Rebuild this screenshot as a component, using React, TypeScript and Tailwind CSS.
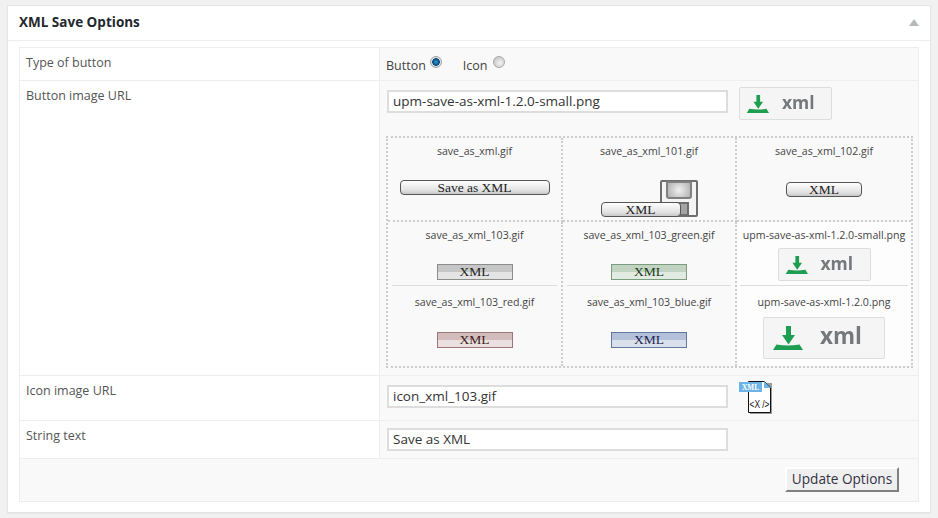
import React from "react";

const serif = "font-['Liberation_Serif',serif]";

function Radio({ on }: { on?: boolean }) {
  return (
    <span
      className={
        on
          ? "w-3 h-3 rounded-full border border-[#a0a0a0] bg-[radial-gradient(circle,#3a9ad6_0%,#0b4f86_45%,#0b4f86_50%,#e6e6e6_58%,#d4d4d4_100%)] mb-[7px] ml-[4px]"
          : "w-3 h-3 rounded-full border border-[#a8a8a8] bg-[radial-gradient(circle_at_60%_60%,#f2f2f2_0%,#d2d2d2_60%,#bcbcbc_100%)] mb-[7px] ml-[5px]"
      }
    />
  );
}

function Arrow({ w, h }: { w: number; h: number }) {
  return (
    <svg width={w} height={h} viewBox="0 0 31 24" className="blur-[0.3px] shrink-0">
      <path d="M14 0h5v9h4l-6.5 9.5L10 9h4z" fill="#1e9e50" />
      <path d="M1 24l3.5-5.5Q16 20.5 27.5 18.5L31 24z" fill="#1e9e50" />
    </svg>
  );
}

function DownloadXml({ big }: { big?: boolean }) {
  if (big) {
    return (
      <div className="w-[122px] h-[42px] bg-[#f5f5f5] border border-[#dddddd] rounded-[2px] flex items-center pl-[8px] gap-[17px]">
        <Arrow w={31} h={24} />
        <span className="text-[22.5px] leading-none font-bold text-[#75787c] font-['Open_Sans',sans-serif] mb-[3px] blur-[0.3px]">xml</span>
      </div>
    );
  }
  return (
    <div className="w-[93px] h-[33px] bg-[#f5f5f5] border border-[#dddddd] rounded-[2px] flex items-center pl-[6px] gap-[13px]">
      <Arrow w={23} h={18} />
      <span className="text-[17.5px] leading-none font-bold text-[#75787c] font-['Open_Sans',sans-serif] mb-[2px] blur-[0.3px]">xml</span>
    </div>
  );
}

function Pill({ text, w }: { text: string; w: string }) {
  return (
    <div
      className={`${w} h-[15px] rounded-[4px] border border-[#555555] bg-[linear-gradient(#ffffff,#e2e2e2_70%,#c9c9c9)] flex items-center justify-center text-[13.5px] leading-none text-[#222222] ${serif}`}
    >
      {text}
    </div>
  );
}

function Flat({ tone }: { tone: "gray" | "green" | "red" | "blue" }) {
  const cls = {
    gray: "border-[#8c8c8c] bg-[linear-gradient(#c6c6c6_50%,#e4e4e4_50%)] text-[#222222]",
    green: "border-[#7d9c7d] bg-[linear-gradient(#c1d3c1_50%,#e2ebe2_50%)] text-[#1c3a1c]",
    red: "border-[#9c7676] bg-[linear-gradient(#d3bcbc_50%,#ebe0e0_50%)] text-[#3a1c1c]",
    blue: "border-[#5f78a2] bg-[linear-gradient(#b4c1d9_50%,#dbe1ec_50%)] text-[#1c2650]",
  }[tone];
  return (
    <div className={`w-[76px] h-4 border flex items-center justify-center text-[13.5px] leading-none ${serif} ${cls}`}>
      XML
    </div>
  );
}

function Floppy() {
  return (
    <div className="relative w-[97px] h-[37px]">
      <div className="absolute right-0 top-0 w-[38px] h-[37px] bg-[#f4f4f4] border-2 border-[#6e6e6e] rounded-[2px]" />
      <div className="absolute right-[6px] top-[1px] w-[26px] h-[18px] border-2 border-[#808080] rounded-b-[3px] bg-[radial-gradient(circle,#f0f0f0,#b0b0b0)]" />
      <div className="absolute right-[9px] bottom-[1px] w-[26px] h-[14px] bg-[#a4a4a4] border-2 border-[#6e6e6e]" />
      <div className="absolute left-0 bottom-0 w-[80px] h-[15px] rounded-[4px] border border-[#555555] bg-[linear-gradient(#ffffff,#e2e2e2_70%,#c9c9c9)] flex items-center justify-center text-[13.5px] leading-none text-[#222222] font-['Liberation_Serif',serif]">
        XML
      </div>
    </div>
  );
}

function Label({ children }: { children: React.ReactNode }) {
  return <div className="text-[10.6px] leading-[15px] text-[#444444] whitespace-nowrap text-center">{children}</div>;
}

function XmlFileIcon() {
  return (
    <svg width="34" height="34" viewBox="0 0 34 34">
      <path d="M11 3h22v31H11z" fill="#9a9a9a" />
      <path d="M9.5 1.5h16l6 6v25h-22z" fill="#ffffff" stroke="#111111" strokeWidth="1" />
      <path d="M25 1l7 7h-7z" fill="#6db3e6" />
      <rect x="0" y="2" width="23" height="10" fill="#6db3e6" />
      <text x="3" y="10" fontSize="8.5" fill="#ffffff" fontFamily="Liberation Serif, serif" fontWeight="700" textLength="17" lengthAdjust="spacingAndGlyphs">XML</text>
      <text x="10.5" y="28" fontSize="10" fill="#111111" fontFamily="Liberation Sans, sans-serif" textLength="20" lengthAdjust="spacingAndGlyphs">{"<X />"}</text>
    </svg>
  );
}

const inputCls =
  "w-[341px] border-2 border-[#dddddd] bg-white px-[4px] pb-[2px] text-[13.5px] text-[#333333] outline-none font-['Open_Sans',sans-serif]";
const leftCls = "bg-white px-[6px] pt-[6px] text-[12.5px] leading-[18px] text-[#555555] border-r border-[#eeeeee]";
const rowCls = "grid grid-cols-[360px_1fr] border-b border-[#eeeeee]";

export default function App() {
  return (
    <div className="w-[938px] h-[518px] bg-[#f1f1f1] pt-[5px] px-[7px] font-['Open_Sans',sans-serif]">
      <div className="h-[508px] bg-white border border-[#e5e5e5] shadow-[0_1px_1px_rgba(0,0,0,0.04)]">
        <div className="h-[35px] flex items-center justify-between pl-[11px] pr-[5px] pb-[2px] border-b border-[#eeeeee]">
          <h3 className="text-[13.5px] leading-[20px] font-bold text-[#23282d]">XML Save Options</h3>
          <div className="w-0 h-0 border-x-[5px] border-x-transparent border-b-[7px] border-b-[#b4b9be] mr-[6px]" />
        </div>
        <div className="mt-[6px] mx-[11px] w-[900px] border border-[#eeeeee] bg-[#f9f9f9]">
          <div className={`${rowCls} h-[33px]`}>
            <div className={leftCls}>Type of button</div>
            <div className="flex items-end pl-[6px] pb-[5px] text-[12.5px] leading-[18px] text-[#444444]">
              <span>Button</span>
              <Radio on />
              <span className="ml-[21px]">Icon</span>
              <Radio />
            </div>
          </div>

          <div className={`${rowCls} h-[295px]`}>
            <div className={leftCls}>Button image URL</div>
            <div className="pl-[6px] pt-[6px]">
              <div className="flex items-start gap-[11px] pl-[1px]">
                <input readOnly value="upm-save-as-xml-1.2.0-small.png" className={`${inputCls} h-[23px] mt-[3px]`} />
                <DownloadXml />
              </div>
              <div className="mt-[16px] w-[527px] h-[232px] border-2 border-dotted border-[#cccccc] grid grid-cols-[175px_174px_174px] grid-rows-[84px_144px]">
                <div className="flex flex-col items-center pt-[6px] border-r-2 border-b-2 border-dotted border-[#cccccc]">
                  <Label>save_as_xml.gif</Label>
                  <div className="mt-[21px]"><Pill text="Save as XML" w="w-[150px]" /></div>
                </div>
                <div className="flex flex-col items-center pt-[6px] border-r-2 border-b-2 border-dotted border-[#cccccc]">
                  <Label>save_as_xml_101.gif</Label>
                  <div className="mt-[21px]"><Floppy /></div>
                </div>
                <div className="flex flex-col items-center pt-[6px] border-b-2 border-dotted border-[#cccccc]">
                  <Label>save_as_xml_102.gif</Label>
                  <div className="mt-[23px]"><Pill text="XML" w="w-[76px]" /></div>
                </div>

                <div className="flex flex-col border-r-2 border-dotted border-[#cccccc] px-[4px]">
                  <div className="h-[64px] border-b border-[#dddddd] flex flex-col items-center pt-[6px]">
                    <Label>save_as_xml_103.gif</Label>
                    <div className="mt-[21px]"><Flat tone="gray" /></div>
                  </div>
                  <div className="flex flex-col items-center pt-[9px]">
                    <Label>save_as_xml_103_red.gif</Label>
                    <div className="mt-[22px]"><Flat tone="red" /></div>
                  </div>
                </div>
                <div className="flex flex-col border-r-2 border-dotted border-[#cccccc] px-[4px]">
                  <div className="h-[64px] border-b border-[#dddddd] flex flex-col items-center pt-[6px]">
                    <Label>save_as_xml_103_green.gif</Label>
                    <div className="mt-[21px]"><Flat tone="green" /></div>
                  </div>
                  <div className="flex flex-col items-center pt-[9px]">
                    <Label>save_as_xml_103_blue.gif</Label>
                    <div className="mt-[22px]"><Flat tone="blue" /></div>
                  </div>
                </div>
                <div className="flex flex-col px-[3px] bg-[#fdfdfd]">
                  <div className="h-[64px] border-b border-[#dddddd] flex flex-col items-center pt-[6px]">
                    <Label>upm-save-as-xml-1.2.0-small.png</Label>
                    <div className="mt-[5px]"><DownloadXml /></div>
                  </div>
                  <div className="flex flex-col items-center pt-[9px]">
                    <Label>upm-save-as-xml-1.2.0.png</Label>
                    <div className="mt-[7px]"><DownloadXml big /></div>
                  </div>
                </div>
              </div>
            </div>
          </div>

          <div className={`${rowCls} h-[45px]`}>
            <div className={leftCls}>Icon image URL</div>
            <div className="pl-[7px] flex items-start gap-[11px]">
              <input readOnly value="icon_xml_103.gif" className={`${inputCls} h-[23px] mt-[9px]`} />
              <div className="mt-[4px]"><XmlFileIcon /></div>
            </div>
          </div>

          <div className={`${rowCls} h-[38px]`}>
            <div className={leftCls}>String text</div>
            <div className="pl-[7px] pt-[7px] flex items-start">
              <input readOnly value="Save as XML" className={`${inputCls} h-[23px]`} />
            </div>
          </div>

          <div className="h-[42px] flex justify-end items-start pr-[19px] pt-[8px]">
            <button className="w-[114px] h-[25px] pb-[2px] bg-[#efefef] border-2 border-solid border-t-white border-l-white border-r-[#808080] border-b-[#808080] text-[13.6px] leading-none text-[#333344] font-['Open_Sans',sans-serif]">
              Update Options
            </button>
          </div>
        </div>
      </div>
    </div>
  );
}
